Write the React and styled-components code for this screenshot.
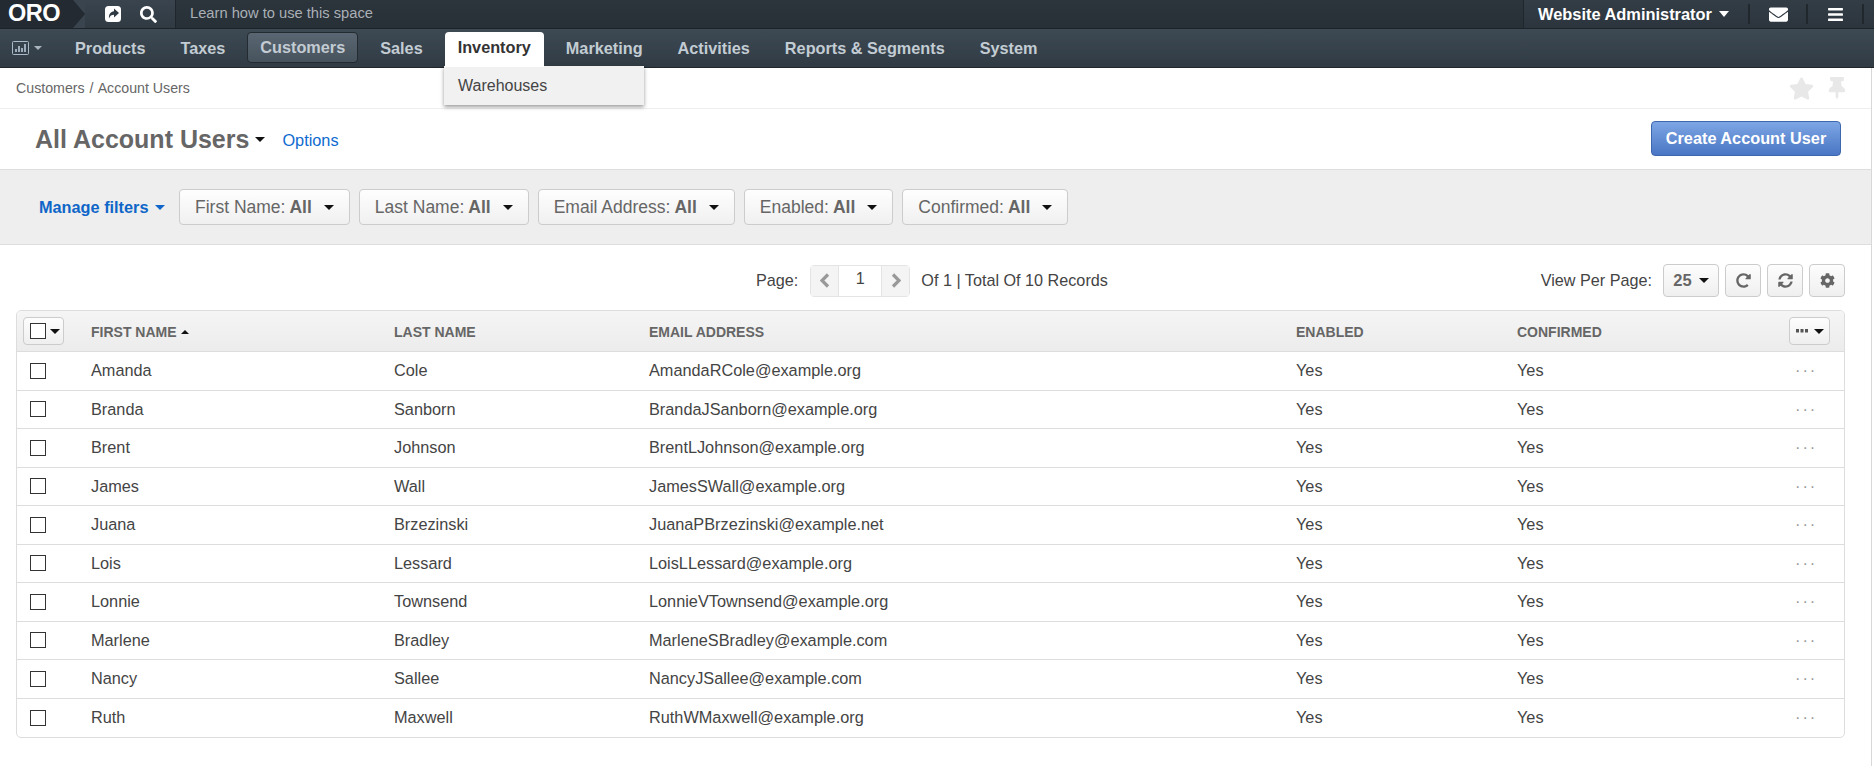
import React from 'react';
import styled, { createGlobalStyle } from 'styled-components';
import { FaSearch, FaEnvelope, FaBars, FaStar, FaThumbtack, FaRedoAlt, FaSyncAlt, FaCog } from 'react-icons/fa';

const GlobalStyle = createGlobalStyle`
  html, body { margin: 0; padding: 0; background: #fff; }
  body {
    font-family: 'Liberation Sans', Arial, sans-serif;
    font-size: 16px;
    color: #444;
    overflow: hidden;
  }
`;

const Page = styled.div`
  width: 1874px;
  height: 766px;
  position: relative;
  overflow: hidden;
`;

const TopBar = styled.div`
  height: 29px;
  display: flex;
  align-items: stretch;
  box-sizing: border-box;
  background: linear-gradient(#2c343c, #272f37);
  border-bottom: 1px solid #1d2329;
`;

const Logo = styled.div`
  width: 85px;
  padding-left: 8px;
  box-sizing: border-box;
  color: #fff;
  font-size: 23.5px;
  font-weight: bold;
  line-height: 27px;
  letter-spacing: -0.5px;
  position: relative;
  background: #232a31;
`;

const LogoNotch = styled.svg`
  position: absolute;
  top: 0;
  right: 0;
  width: 12px;
  height: 28px;
`;

const QuickIcons = styled.div`
  width: 91px;
  display: flex;
  align-items: center;
  padding-left: 20px;
  gap: 19px;
  box-sizing: border-box;
  background: linear-gradient(#39444e, #303a43);
  color: #fff;
  border-right: 1px solid #1f262c;
`;

const Hint = styled.div`
  flex: 1;
  padding-left: 14px;
  color: #a9afb5;
  font-size: 14.7px;
  line-height: 27px;
`;

const UserArea = styled.div`
  width: 351px;
  display: flex;
  align-items: center;
  box-sizing: border-box;
  padding-left: 14px;
  background: linear-gradient(#333d46, #2c353d);
  border-left: 1px solid #1f262c;
  color: #fff;
`;

const UserName = styled.span`
  font-size: 16.4px;
  font-weight: bold;
  width: 175px;
  white-space: nowrap;
`;

const WhiteCaret = styled.span`
  width: 0;
  height: 0;
  margin-left: 6px;
  border-left: 5.5px solid transparent;
  border-right: 5.5px solid transparent;
  border-top: 6px solid #fff;
`;

const BarCell = styled.span`
  display: flex;
  align-items: center;
  justify-content: center;
  width: ${(p) => p.$w}px;
  height: 20px;
  border-left: 2px solid #20272d;
  flex: none;
`;

const UserDivide = styled(BarCell)`
  margin-left: 19px;
`;

const NavBar = styled.div`
  height: 39px;
  display: flex;
  align-items: flex-start;
  padding-top: 3px;
  box-sizing: border-box;
  background: linear-gradient(#3d4953, #303b44);
  border-bottom: 1px solid #1f262c;
  position: relative;
`;

const ChartBtn = styled.div`
  width: 62px;
  height: 31px;
  display: flex;
  align-items: center;
  padding-left: 12px;
  box-sizing: border-box;
  color: #a9bac8;
`;

const NavCaret = styled.span`
  width: 0;
  height: 0;
  margin-left: 5px;
  border-left: 4.5px solid transparent;
  border-right: 4.5px solid transparent;
  border-top: 4.5px solid #a9b4bd;
`;

const Tabs = styled.div`
  display: flex;
  gap: 9px;
`;

const Tab = styled.div`
  padding: 0 13px;
  height: 31px;
  line-height: 33px;
  font-size: 16.25px;
  font-weight: bold;
  color: #c3ccd3;
  box-sizing: border-box;
  white-space: nowrap;
  border-radius: 4px;
  ${(p) =>
    p.$active &&
    `
    background: linear-gradient(#5a6671, #46525c);
    border: 1px solid #232a30;
    padding: 0 12px;
    line-height: 28px;
  `}
  ${(p) =>
    p.$open &&
    `
    background: #fff;
    color: #333;
    height: 35px;
    border-radius: 4px 4px 0 0;
    line-height: 30px;
    position: relative;
    z-index: 3;
  `}
`;

const DropMenu = styled.div`
  position: absolute;
  left: 444px;
  top: 66px;
  width: 200px;
  height: 39px;
  box-sizing: border-box;
  padding-left: 14px;
  line-height: 39px;
  font-size: 16px;
  color: #444;
  background: #f1f1f1;
  box-shadow: 0 2px 4px rgba(0, 0, 0, 0.4);
  z-index: 2;
`;

const Content = styled.div`
  width: 1871px;
  border-right: 1px solid #d8d8d8;
  height: 698px;
`;

const Crumbs = styled.div`
  height: 41px;
  display: flex;
  align-items: center;
  justify-content: space-between;
  padding: 0 23px 0 16px;
  box-sizing: border-box;
  border-bottom: 1px solid #eee;
  font-size: 14.2px;
  color: #666;
`;

const CrumbSep = styled.span`
  margin: 0 1px;
`;

const CrumbIcons = styled.div`
  display: flex;
  gap: 12px;
  color: #e8e8e8;
  align-items: center;
`;

const TitleRow = styled.div`
  height: 60px;
  display: flex;
  align-items: center;
  padding: 0 30px 0 35px;
  box-sizing: border-box;
`;

const PageTitle = styled.h1`
  margin: 0;
  font-size: 25px;
  font-weight: bold;
  color: #666;
`;

const Caret = styled.span`
  display: inline-block;
  width: 0;
  height: 0;
  flex: none;
  margin-left: ${(p) => p.$ml ?? 8}px;
  border-left: ${(p) => p.$s ?? 5}px solid transparent;
  border-right: ${(p) => p.$s ?? 5}px solid transparent;
  ${(p) => (p.$up ? 'border-bottom' : 'border-top')}: ${(p) => p.$s ?? 5}px solid ${(p) => p.$c ?? '#111'};
`;

const OptionsLink = styled.a`
  margin-left: 17px;
  color: #0f6bd0;
  font-size: 16.3px;
  margin-top: 3px;
`;

const CreateButton = styled.button`
  margin-left: auto;
  margin-bottom: 2px;
  width: 190px;
  height: 35px;
  padding: 0;
  font: bold 16.3px 'Liberation Sans', Arial, sans-serif;
  color: #fff;
  border: 1px solid #3e68ad;
  border-radius: 4px;
  background: linear-gradient(#7ca6e4, #4a76c4);
`;

const FilterBar = styled.div`
  height: 76px;
  display: flex;
  align-items: center;
  padding-left: 39px;
  box-sizing: border-box;
  background: #eee;
  border-top: 1px solid #ddd;
  border-bottom: 1px solid #ddd;
  gap: 9px;
`;

const ManageFilters = styled.a`
  width: 131px;
  display: flex;
  align-items: center;
  flex: none;
  color: #0f66c8;
  font-weight: bold;
  font-size: 16.3px;
`;

const FilterButton = styled.div`
  height: 36px;
  display: flex;
  align-items: center;
  padding: 0 15px;
  box-sizing: border-box;
  font-size: 17.5px;
  color: #666;
  border: 1px solid #ccc;
  border-radius: 4px;
  background: linear-gradient(#fefefe, #f0f0f0);
  b { margin-left: 4px; }
`;

const Toolbar = styled.div`
  height: 65px;
  display: flex;
  align-items: center;
  padding: 6px 26px 0 756px;
  box-sizing: border-box;
  font-size: 16.2px;
  color: #444;
`;

const Pager = styled.div`
  margin: 0 11px 0 12px;
  display: flex;
  height: 32px;
  border: 1px solid #e4e4e4;
  border-radius: 4px;
  box-sizing: border-box;
  width: 100px;
`;

const PagerArrow = styled.span`
  width: 27px;
  display: flex;
  align-items: center;
  justify-content: center;
  background: #f4f4f4;
  color: #999;
`;

const PagerInput = styled.span`
  flex: 1;
  text-align: center;
  line-height: 25px;
  color: #444;
  border-left: 1px solid #e4e4e4;
  border-right: 1px solid #e4e4e4;
`;

const ToolRight = styled.div`
  margin-left: auto;
  display: flex;
  align-items: center;
  gap: 6px;
`;

const ToolButton = styled.div`
  width: ${(p) => p.$w ?? 36}px;
  height: 33px;
  display: flex;
  align-items: center;
  justify-content: center;
  box-sizing: border-box;
  border: 1px solid #ccc;
  border-radius: 4px;
  background: linear-gradient(#fdfdfd, #efefef);
  color: #666;
  font-size: 16.5px;
  font-weight: bold;
`;

const PerPageLabel = styled.span`
  margin-right: 5px;
`;

const GridBox = styled.div`
  margin-left: 16px;
  width: 1829px;
  box-sizing: border-box;
  border: 1px solid #ddd;
  border-radius: 5px;
  overflow: hidden;
`;

const gridCols = '74px 303px 255px 647px 221px 272px 1fr';

const HeadRow = styled.div`
  display: grid;
  grid-template-columns: ${gridCols};
  align-items: center;
  height: 41px;
  background: linear-gradient(#f5f5f5, #ececec);
  border-bottom: 1px solid #ddd;
  box-sizing: border-box;
  font-size: 14px;
  font-weight: bold;
  color: #666;
`;

const Row = styled.div`
  display: grid;
  grid-template-columns: ${gridCols};
  align-items: center;
  height: 38.5px;
  box-sizing: border-box;
  border-bottom: 1px solid #ddd;
  font-size: 16.3px;
  color: #444;
  &:last-child { border-bottom: 0; }
`;

const HeadCell = styled.div`
  display: flex;
  align-items: center;
  white-space: nowrap;
  padding-top: 2px;
`;

const Box = styled.span`
  display: block;
  width: 16px;
  height: 16px;
  box-sizing: border-box;
  border: 1px solid #333;
  background: #fff;
  flex: none;
`;

const CheckCell = styled.div`
  padding-left: 13px;
`;

const MassButton = styled.div`
  margin-left: 6px;
  width: 41px;
  height: 28px;
  display: flex;
  align-items: center;
  padding-left: 6px;
  box-sizing: border-box;
  border: 1px solid #ccc;
  border-radius: 4px;
  background: linear-gradient(#fdfdfd, #efefef);
`;

const ColumnsButton = styled(MassButton)`
  margin-left: 0;
  color: #555;
`;

const RowDots = styled.div`
  color: #999;
  padding-left: 6px;
  letter-spacing: 2px;
`;

const rows = [
  ['Amanda', 'Cole', 'AmandaRCole@example.org'],
  ['Branda', 'Sanborn', 'BrandaJSanborn@example.org'],
  ['Brent', 'Johnson', 'BrentLJohnson@example.org'],
  ['James', 'Wall', 'JamesSWall@example.org'],
  ['Juana', 'Brzezinski', 'JuanaPBrzezinski@example.net'],
  ['Lois', 'Lessard', 'LoisLLessard@example.org'],
  ['Lonnie', 'Townsend', 'LonnieVTownsend@example.org'],
  ['Marlene', 'Bradley', 'MarleneSBradley@example.com'],
  ['Nancy', 'Sallee', 'NancyJSallee@example.com'],
  ['Ruth', 'Maxwell', 'RuthWMaxwell@example.org'],
];

const tabs = ['Products', 'Taxes', 'Customers', 'Sales', 'Inventory', 'Marketing', 'Activities', 'Reports & Segments', 'System'];
const filters = ['First Name', 'Last Name', 'Email Address', 'Enabled', 'Confirmed'];

const ChartIcon = () => (
  <svg width="17" height="14" viewBox="0 0 17 14" fill="none">
    <rect x="0.5" y="0.5" width="16" height="13" rx="1" stroke="currentColor" />
    <path d="M4 11V8M7 11V5M10 11V7M13 11V3" stroke="currentColor" strokeWidth="1.8" />
  </svg>
);

const ShareIcon = () => (
  <svg width="16" height="16" viewBox="0 0 16 16">
    <rect width="16" height="16" rx="3.5" fill="#fff" />
    <path d="M9 2.5L14 7L9 11.5V8.8C6.5 8.8 5 9.6 4 12.5C3.6 8.5 5.5 5.6 9 5.2V2.5Z" fill="#2f3942" />
  </svg>
);

const PagerChevron = ({ flip }) => (
  <svg width="10" height="15" viewBox="0 0 10 15" fill="none">
    <path d={flip ? 'M2 1.5L8 7.5L2 13.5' : 'M8 1.5L2 7.5L8 13.5'} stroke="currentColor" strokeWidth="3.2" />
  </svg>
);

const SquareDots = () => (
  <svg width="12" height="4" viewBox="0 0 12 4" fill="currentColor">
    <rect width="3" height="3.5" />
    <rect x="4.5" width="3" height="3.5" />
    <rect x="9" width="3" height="3.5" />
  </svg>
);

const App = () => (
  <Page>
    <GlobalStyle />
    <TopBar>
      <Logo>
        ORO
        <LogoNotch viewBox="0 0 12 28">
          <path d="M0 0L12 14L0 28V0Z" fill="#232a31" />
          <path d="M0 0H12V28H0L12 14Z" fill="#39444e" />
        </LogoNotch>
      </Logo>
      <QuickIcons>
        <ShareIcon />
        <FaSearch size={17} />
      </QuickIcons>
      <Hint>Learn how to use this space</Hint>
      <UserArea>
        <UserName>Website Administrator</UserName>
        <WhiteCaret />
        <UserDivide $w={56}>
          <FaEnvelope size={19} />
        </UserDivide>
        <BarCell $w={54}>
          <FaBars size={17} />
        </BarCell>
        <BarCell $w={10} />
      </UserArea>
    </TopBar>
    <NavBar>
      <ChartBtn>
        <ChartIcon />
        <NavCaret />
      </ChartBtn>
      <Tabs>
        {tabs.map((t) => (
          <Tab key={t} $active={t === 'Customers'} $open={t === 'Inventory'}>
            {t}
          </Tab>
        ))}
      </Tabs>
    </NavBar>
    <DropMenu>Warehouses</DropMenu>
    <Content>
      <Crumbs>
        <span>
          Customers <CrumbSep>/</CrumbSep> Account Users
        </span>
        <CrumbIcons>
          <FaStar size={25} />
          <FaThumbtack size={22} />
        </CrumbIcons>
      </Crumbs>
      <TitleRow>
        <PageTitle>All Account Users</PageTitle>
        <Caret $ml={6} />
        <OptionsLink>Options</OptionsLink>
        <CreateButton>Create Account User</CreateButton>
      </TitleRow>
      <FilterBar>
        <ManageFilters>
          Manage filters
          <Caret $c="#0f66c8" $s={5} $ml={7} />
        </ManageFilters>
        {filters.map((f) => (
          <FilterButton key={f}>
            {f}: <b>All</b>
            <Caret $ml={12} />
          </FilterButton>
        ))}
      </FilterBar>
      <Toolbar>
        <span>Page:</span>
        <Pager>
          <PagerArrow>
            <PagerChevron />
          </PagerArrow>
          <PagerInput>1</PagerInput>
          <PagerArrow>
            <PagerChevron flip />
          </PagerArrow>
        </Pager>
        <span>Of 1 | Total Of 10 Records</span>
        <ToolRight>
          <PerPageLabel>View Per Page:</PerPageLabel>
          <ToolButton $w={56}>
            25
            <Caret $ml={7} />
          </ToolButton>
          <ToolButton>
            <FaRedoAlt size={15} />
          </ToolButton>
          <ToolButton>
            <FaSyncAlt size={15} />
          </ToolButton>
          <ToolButton>
            <FaCog size={15} />
          </ToolButton>
        </ToolRight>
      </Toolbar>
      <GridBox>
        <HeadRow>
          <MassButton>
            <Box />
            <Caret $ml={4} $s={5} />
          </MassButton>
          <HeadCell>
            FIRST NAME
            <Caret $up $s={4.5} $ml={4} />
          </HeadCell>
          <HeadCell>LAST NAME</HeadCell>
          <HeadCell>EMAIL ADDRESS</HeadCell>
          <HeadCell>ENABLED</HeadCell>
          <HeadCell>CONFIRMED</HeadCell>
          <ColumnsButton>
            <SquareDots />
            <Caret $ml={6} $s={5} />
          </ColumnsButton>
        </HeadRow>
        {rows.map(([first, last, email]) => (
          <Row key={email}>
            <CheckCell>
              <Box />
            </CheckCell>
            <div>{first}</div>
            <div>{last}</div>
            <div>{email}</div>
            <div>Yes</div>
            <div>Yes</div>
            <RowDots>···</RowDots>
          </Row>
        ))}
      </GridBox>
    </Content>
  </Page>
);

export default App;
